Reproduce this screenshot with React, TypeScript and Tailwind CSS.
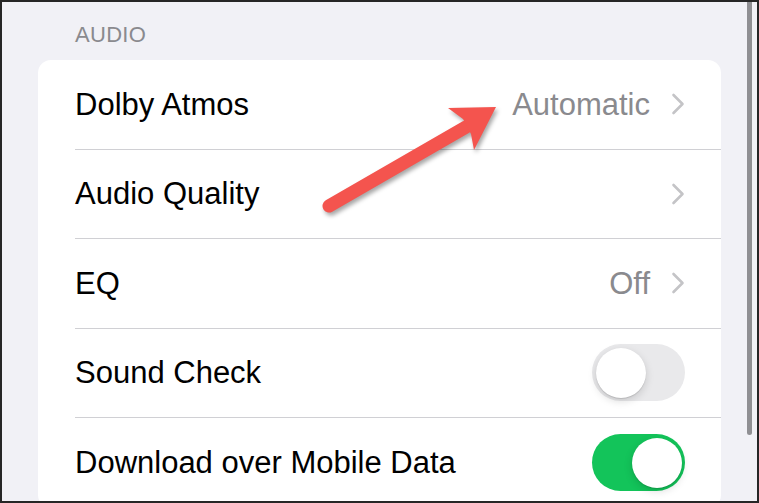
import type { ReactNode } from 'react';

type RowProps = {
    label: string;
    value?: string;
    chevron?: boolean;
    toggle?: boolean;
    on?: boolean;
    last?: boolean;
};

const Chevron = () => (
    <svg width="14" height="22" viewBox="0 0 14 22" className="shrink-0">
        <polyline points="2.5,2 11.5,11 2.5,20" fill="none" stroke="#c4c4c7" strokeWidth="2.6" strokeLinecap="round" strokeLinejoin="round" />
    </svg>
);

const Toggle = ({ on }: { on?: boolean }) => (
    <div
        className={
            on
                ? 'flex h-[57px] w-[93px] items-center justify-end rounded-full bg-[#13c45a] px-[3.5px]'
                : 'flex h-[57px] w-[93px] items-center justify-start rounded-full bg-[#e9e9eb] px-[3.5px]'
        }
    >
        <div className="h-[50px] w-[50px] rounded-full bg-white shadow-[0_3px_8px_rgba(0,0,0,0.15),0_1px_1px_rgba(0,0,0,0.12)]" />
    </div>
);

const Row = ({ label, value, chevron, toggle, on, last }: RowProps) => {
    let accessory: ReactNode = null;
    if (toggle) {
        accessory = <Toggle on={on} />;
    } else if (chevron) {
        accessory = (
            <div className="flex items-center gap-[21px]">
                {value && <span className="text-[31px] leading-none text-[#8a8a8e]">{value}</span>}
                <Chevron />
            </div>
        );
    }

    return (
        <div className="pl-[37px]">
            <div
                className={
                    last
                        ? 'flex h-[89.5px] items-center justify-between pr-[36px]'
                        : 'flex h-[89.5px] items-center justify-between border-b border-[#d0d0d4] pr-[36px]'
                }
            >
                <span className="text-[31px] leading-none text-black">{label}</span>
                {accessory}
            </div>
        </div>
    );
};

export default function App() {
    return (
        <div
            className="relative h-[503px] w-[759px] overflow-hidden border-2 border-[#262626] bg-[#f1f1f6]"
            style={{ fontFamily: '"Liberation Sans", Arial, sans-serif' }}
        >
            <div className="px-[36px]">
                <div className="mt-[22px] pl-[37px] text-[22px] leading-none tracking-[0.3px] text-[#8a8a8e]">AUDIO</div>
                <div className="mt-[14px] overflow-hidden rounded-[13px] bg-white">
                    <Row label="Dolby Atmos" value="Automatic" chevron />
                    <Row label="Audio Quality" chevron />
                    <Row label="EQ" value="Off" chevron />
                    <Row label="Sound Check" toggle />
                    <Row label="Download over Mobile Data" toggle on last />
                </div>
            </div>

            {/* scroll indicator */}
            <div className="absolute left-[745px] top-[-10px] h-[443px] w-[5px] rounded-full bg-[#8f8f93]" />

            {/* annotation arrow */}
            <svg
                width="759"
                height="503"
                viewBox="0 0 759 503"
                className="pointer-events-none absolute left-[-2px] top-[-2px] drop-shadow-[2px_3px_2px_rgba(0,0,0,0.35)]"
            >
                <line x1="329" y1="206" x2="466" y2="127" stroke="#f4544e" strokeWidth="13" strokeLinecap="round" />
                <polygon points="496,107 448,108 463,119 471,134 474,150" fill="#f4544e" />
            </svg>
        </div>
    );
}
